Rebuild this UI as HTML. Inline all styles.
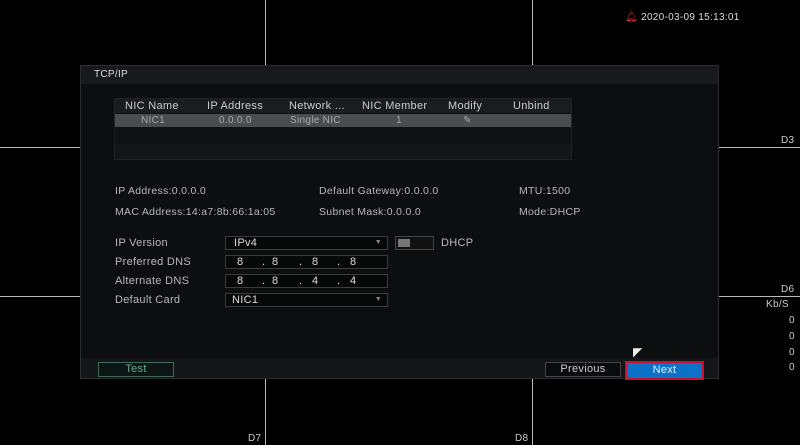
<!DOCTYPE html>
<html><head><style>
body{margin:0;width:800px;height:445px;background:#000;position:relative;overflow:hidden;font-family:"Liberation Sans",sans-serif;color:#b8b8b8;font-size:11px;letter-spacing:0.3px}
.a{position:absolute}
.vl{position:absolute;width:1px;background:#bbb}
.hl{position:absolute;height:1px;background:#bbb}
.lbl{position:absolute;color:#ccc;font-size:10px}
.panel{position:absolute;left:80px;top:65px;width:639px;height:314px;background:#0c0e10;border:1px solid #2a2c2e;box-sizing:border-box}
.inp{position:absolute;height:14px;border:1px solid #3a3c3e;background:#070808;box-sizing:border-box;color:#ddd;font-size:11px;line-height:12px}
</style></head><body>
<div class="vl" style="left:265px;top:0;height:445px"></div>
<div class="vl" style="left:532px;top:0;height:445px"></div>
<div class="hl" style="left:0;top:147px;width:800px"></div>
<div class="hl" style="left:0;top:296px;width:800px"></div>
<div class="lbl" style="left:781px;top:135px">D3</div>
<div class="lbl" style="left:781px;top:284px">D6</div>
<div class="lbl" style="left:766px;top:299px">Kb/S</div>
<div class="lbl" style="left:789px;top:315px">0</div>
<div class="lbl" style="left:789px;top:331px">0</div>
<div class="lbl" style="left:789px;top:347px">0</div>
<div class="lbl" style="left:789px;top:362px">0</div>
<div class="lbl" style="left:248px;top:433px">D7</div>
<div class="lbl" style="left:515px;top:433px">D8</div>
<div class="lbl" style="left:625px;top:12px;color:#ddd;font-size:10px"><span style="color:#d33">&#x1F514;&#xFE0E;</span> 2020-03-09 15:13:01</div>
<div class="panel">
 <div class="a" style="left:0;top:0;width:637px;height:18px;background:#17191b;color:#ddd;font-size:10px;line-height:18px;padding-left:13px;box-sizing:border-box">TCP/IP</div>
 <div class="a" style="left:33px;top:32px;width:456px;height:60px;background:#0f1113;border:1px solid #222">
  <div class="a" style="left:0;top:0;width:456px;height:14px;background:#1a1c1e;color:#ccc;font-size:11px;line-height:14px">
   <span class="a" style="left:10px">NIC Name</span><span class="a" style="left:92px">IP Address</span><span class="a" style="left:174px">Network ...</span><span class="a" style="left:247px">NIC Member</span><span class="a" style="left:333px">Modify</span><span class="a" style="left:398px">Unbind</span>
  </div>
  <div class="a" style="left:0;top:15px;width:456px;height:13px;background:#4a4c4e;color:#aaa;font-size:10px;line-height:13px">
   <span class="a" style="left:26px">NIC1</span><span class="a" style="left:104px">0.0.0.0</span><span class="a" style="left:175px">Single NIC</span><span class="a" style="left:281px">1</span><span class="a" style="left:348px">&#x270E;</span>
  </div>
  <div class="a" style="left:0;top:45px;width:456px;height:15px;background:#141618"></div>
 </div>
 <div class="a" style="left:34px;top:119px;font-size:10.5px">IP Address:0.0.0.0</div>
 <div class="a" style="left:238px;top:119px;font-size:10.5px">Default Gateway:0.0.0.0</div>
 <div class="a" style="left:438px;top:119px;font-size:10.5px">MTU:1500</div>
 <div class="a" style="left:34px;top:140px;font-size:10.5px">MAC Address:14:a7:8b:66:1a:05</div>
 <div class="a" style="left:238px;top:140px;font-size:10.5px">Subnet Mask:0.0.0.0</div>
 <div class="a" style="left:438px;top:140px;font-size:10.5px">Mode:DHCP</div>
 <div class="a" style="left:34px;top:171px">IP Version</div>
 <div class="a" style="left:34px;top:190px">Preferred DNS</div>
 <div class="a" style="left:34px;top:209px">Alternate DNS</div>
 <div class="a" style="left:34px;top:228px">Default Card</div>
 <div class="inp" style="left:144px;top:170px;width:163px;padding-left:8px">IPv4<span class="a" style="right:5px;top:0;font-size:7px;color:#888">&#9660;</span></div>
 <div class="a" style="left:314px;top:170px;width:39px;height:14px;border:1px solid #444;box-sizing:border-box;background:#111"><div class="a" style="left:2px;top:2px;width:12px;height:8px;background:#777"></div></div>
 <div class="a" style="left:360px;top:171px;color:#bbb">DHCP</div>
 <div class="inp" style="left:144px;top:189px;width:163px"><span class="a" style="left:11px">8</span><span class="a" style="left:36px">.</span><span class="a" style="left:46px">8</span><span class="a" style="left:73px">.</span><span class="a" style="left:86px">8</span><span class="a" style="left:111px">.</span><span class="a" style="left:124px">8</span></div>
 <div class="inp" style="left:144px;top:208px;width:163px"><span class="a" style="left:11px">8</span><span class="a" style="left:36px">.</span><span class="a" style="left:46px">8</span><span class="a" style="left:73px">.</span><span class="a" style="left:86px">4</span><span class="a" style="left:111px">.</span><span class="a" style="left:124px">4</span></div>
 <div class="inp" style="left:144px;top:227px;width:163px;padding-left:6px">NIC1<span class="a" style="right:5px;top:0;font-size:7px;color:#888">&#9660;</span></div>
 <div class="a" style="left:0;top:292px;width:637px;height:20px;background:#14161a"></div>
 <div class="a" style="left:17px;top:296px;width:76px;height:15px;border:1px solid #3f6a5a;box-sizing:border-box;background:#0d1614;color:#6aa890;text-align:center;line-height:13px">Test</div>
 <div class="a" style="left:464px;top:296px;width:76px;height:15px;border:1px solid #444;box-sizing:border-box;background:#0a0b0c;color:#ccc;text-align:center;line-height:13px">Previous</div>
 <div class="a" style="left:544px;top:295px;width:79px;height:19px;border:2px solid #c8102e;box-sizing:border-box;background:#0a72c8;color:#e8f0ff;text-align:center;line-height:15px">Next</div>
</div>
<div class="a" style="left:633px;top:345px;color:#eee;font-size:12px">&#x25E4;</div>
</body></html>
